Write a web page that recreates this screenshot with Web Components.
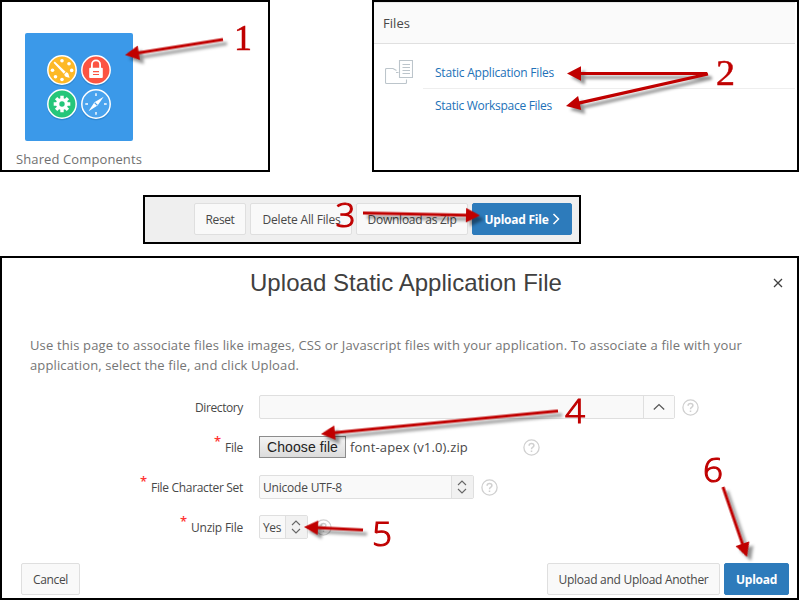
<!DOCTYPE html>
<html lang="en">
<head>
<meta charset="utf-8">
<title>Upload Static Application File</title>
<style>
html,body{margin:0;background:#fff}
body{width:800px;height:600px;overflow:hidden;font-family:"Open Sans","Noto Sans",sans-serif;font-size:12px;color:#484848}
</style>
</head>
<body>
<guide-page></guide-page>
<script>
const define = (name, html, init) => customElements.define(name, class extends HTMLElement {
  connectedCallback() {
    if (this.shadowRoot) return;
    const t = document.createElement('template');
    t.innerHTML = typeof html === 'function' ? html(this) : html;
    this.attachShadow({mode: 'open'}).append(t.content.cloneNode(true));
    if (init) init(this);
  }
});

// A line of text whose tracking is adjusted so that it spans the width in `w`.
define('fit-text', '<style>:host{display:inline-block;white-space:pre;flex:none}span{display:inline-block}</style><span><slot></slot></span>', el => {
  const s = el.shadowRoot.querySelector('span'), w = +el.getAttribute('w');
  const n = el.textContent.length;
  if (w && n) {
    el.style.width = w + 'px';
    s.style.letterSpacing = ((w - s.getBoundingClientRect().width) / n) + 'px';
  }
});

define('guide-panel', `<style>:host{display:block;box-sizing:border-box;border:2px solid #000;background:#fff;flex:none}</style><slot></slot>`);

define('ui-button', `<style>
:host{display:flex;box-sizing:border-box;height:32px;align-items:center;justify-content:center;gap:3px;border:1px solid #dfdfdf;border-radius:2px;background:#f9f9f9;color:#484848;font-size:12px;flex:none}
:host([hot]){background:#2d7bbb;border-color:#2d7bbb;color:#fff;font-weight:700}
</style><slot></slot>`);

define('help-icon', `<style>:host{display:block;width:17px;height:17px;flex:none}svg{display:block}</style>
<svg width="17" height="17" fill="none" stroke="#d0d0d0" stroke-width="1.3"><circle cx="8.5" cy="8.5" r="7.6"/><path d="M6.1 6.7Q6.2 4.6 8.5 4.6Q10.9 4.6 10.9 6.6Q10.9 7.7 9.6 8.4Q8.5 9 8.5 10.2M8.5 11.5V13" stroke-width="1.5"/></svg>`);

define('select-box', `<style>
:host{display:flex;box-sizing:border-box;height:24px;border:1px solid #dfdfdf;border-radius:2px;background:#f9f9f9;align-items:center;flex:none}
div{flex:1;padding-left:3px;line-height:22px;padding-top:1px}
i{display:flex;align-items:center;justify-content:center;box-sizing:border-box;width:22px;height:22px;border-left:1px solid #dfdfdf;background:#f1f1f1;padding-right:1px}
:host([combo]) i{width:31px;background:#fafafa;padding:0}
svg{display:block}
:host([combo]) .both,:host(:not([combo])) .up{display:none}
</style><div><slot></slot></div><i><svg class="both" width="10" height="14" fill="none" stroke="#666" stroke-width="1.1"><path d="M1 5L5 1L9 5M1 9L5 13L9 9"/></svg><svg class="up" width="12" height="8" fill="none" stroke="#555" stroke-width="1.2"><path d="M.8 6.5L6 1.5L11.2 6.5"/></svg></i>`);

define('form-row', el => `<style>
:host{display:flex;height:24px;align-items:center}
.l{width:241px;display:flex;justify-content:flex-end;gap:4px;margin-right:16px;padding-top:1px}
b{color:#f33;font:600 13px/17px "Open Sans",sans-serif;height:17px;margin-top:-6px}
</style><div class="l">${el.hasAttribute('required') ? '<b>*</b>' : ''}<fit-text w="${el.getAttribute('w')}">${el.getAttribute('label')}</fit-text></div><slot></slot>`);

define('file-input', `<style>
:host{display:flex;align-items:center;gap:4px;font-size:13px;color:#484848}
button{box-sizing:border-box;width:87px;height:22px;border:1px solid #8c8c8c;border-radius:0;padding:0;background:linear-gradient(#f4f4f4,#dcdcdc);font:14px "Liberation Sans",sans-serif;line-height:18px;color:#222}
</style><button><fit-text w="71">Choose file</fit-text></button><slot></slot>`);

define('components-icon', `<style>:host{display:block;width:108px;height:108px;background:#3b99e9;border-radius:2px}svg{display:block}</style>
<svg width="108" height="108" viewBox="0 0 108 108">
<g fill="#2478bd" opacity=".5"><circle cx="37" cy="38.3" r="15"/><circle cx="71" cy="38.3" r="15"/><circle cx="37" cy="72.3" r="15"/><circle cx="71" cy="72.3" r="15"/></g>
<g stroke="#fff" stroke-width="1.5"><circle cx="37" cy="37" r="14.2" fill="#fdb927"/><circle cx="71" cy="37" r="14.2" fill="#fc5442"/><circle cx="37" cy="71" r="14.2" fill="#25c67a"/><circle cx="71" cy="71" r="14.2" fill="#49a3ee"/></g>
<g fill="#fff"><circle cx="37" cy="27.7" r="1.8"/><circle cx="44" cy="30.7" r="1.8"/><circle cx="46.7" cy="37.4" r="1.8"/><circle cx="30.5" cy="43.8" r="1.8"/><circle cx="27.5" cy="37.3" r="1.8"/><circle cx="37" cy="46.5" r="1.8"/><path d="M28.5 29.8L29.8 28.6L40.6 38.8L38.8 40.7ZM39.3 41.2L41.2 39.2C43.7 39.5 43.4 41.3 44.7 44.7C41 44.2 39.6 43.5 39.3 41.2Z"/></g>
<path d="M66.9 35V31.5a4.1 4.1 0 0 1 8.2 0V35" fill="none" stroke="#fff" stroke-width="1.8"/><rect x="64.2" y="34.7" width="13.6" height="10.3" rx="1" fill="#fff"/><path d="M68 38.7H74M68 41.5H74" stroke="#fc5442" stroke-width="1.2"/>
<g stroke="#fff" stroke-width="3.4"><path d="M37 62.7V79.3M28.7 71H45.3M31.1 65.1L42.9 76.9M42.9 65.1L31.1 76.9"/></g><circle cx="37" cy="71" r="6" fill="#fff"/><circle cx="37" cy="71" r="2.7" fill="#25c67a"/>
<path d="M71 60.3V63M71 79V81.7M60.3 71H63M79 71H81.7" stroke="#fff" stroke-width="1.4"/><path d="M78.7 63.7L69.4 69.3L63.5 78.3L72.6 72.6Z" fill="#fff"/><path d="M69.6 69.6L72.4 72.4" stroke="#49a3ee" stroke-width="1.3"/></svg>`);

// Red pointers drawn over the panels, with their step numbers.
define('step-marks', () => {
  const lines = [[223,39.5,125,55],[707,73.5,567,73.5],[708,74,566,106],[363,213,480,215.5],[558,411,321,434],[363,530,304,527],[723,487,747,557]];
  const arrows = lines.map(([x1,y1,x2,y2]) => {
    const d = Math.hypot(x2-x1,y2-y1), a = Math.atan2(y2-y1,x2-x1)*180/Math.PI;
    return `<g transform="translate(${x1} ${y1}) rotate(${a})"><path d="M0 -1.6H${d-14}V-7.2L${d} 0L${d-14} 7.2V1.6H0Z"/></g>`;
  }).join('');
  const nums = [[1,234,50],[2,716,85],[3,335.5,227],[4,565,423],[5,372,546],[6,703,482]].map(([n,x,y]) => `<text class="${n<3?'s':''}" x="${x}" y="${y}" textLength="${n===2?19:n===1?18:20}" lengthAdjust="spacingAndGlyphs">${n}</text>`).join('');
  return `<style>:host{position:absolute;left:0;top:0;width:800px;height:600px;pointer-events:none}svg{display:block}.a{fill:#c00000;filter:drop-shadow(4px 4px 1.5px rgba(0,0,0,.42))}text{font:300 33px "Open Sans",sans-serif;fill:#c00000;stroke:#c00000;stroke-width:1.1px}text.s{font:35px "Liberation Serif",serif;stroke-width:.5px}</style>
  <svg width="800" height="600"><g class="a">${arrows}</g>${nums}</svg>`;
});

define('guide-page', `<style>
:host{display:block;position:relative;width:800px;height:600px;overflow:hidden}
.top{display:flex;justify-content:space-between;width:799px;height:172px}
.shared{width:270px;height:172px;padding:31px 0 0 14px}
.shared components-icon{margin-left:9px}
.shared fit-text{font-size:13px;line-height:18px;margin-top:9px;color:#707070}
.files{width:427px;height:172px}
.fh{height:42px;box-sizing:border-box;background:#fafafa;border-top:1px solid #e8e8e8;border-bottom:1px solid #e0e0e0;margin-right:2px;padding:11px 0 0 9px;font-size:13px;line-height:18px}
.fb{display:flex;padding:12px 2px 0 11px}
.fb svg{display:block;margin-top:4px;margin-right:10px}
.links{flex:1;color:#2271b8}
.links div{height:33px;padding-left:12px;display:flex;align-items:center;box-sizing:border-box}
.links div:first-child{border-bottom:1px solid #eee}
.bar{width:438px;height:49px;margin:23px 0 0 143px;background:#efefef;padding:6px 7px 0 0}
.row{display:flex;gap:4px;justify-content:flex-end}
.dialog{width:799px;height:344px;margin-top:12px;position:relative;display:flex;flex-direction:column}
.head{display:flex;align-items:center;height:50px;padding-left:248px;justify-content:space-between;padding-right:14px}
.title{font:24px/30px "Liberation Sans",sans-serif;color:#404040}
.intro{padding:27px 0 0 28px;font-size:13px;line-height:20px;height:94px;box-sizing:border-box;color:#757575}
.intro fit-text{display:block}
form-row{margin-bottom:16px}
.foot{display:flex;gap:4px;padding:0 8px 0 19px;margin-top:8px}
.grow{flex:1}
help-icon{margin:0 0 0 7px}
</style>
<div class="top">
 <guide-panel class="shared"><components-icon></components-icon><fit-text w="126">Shared Components</fit-text></guide-panel>
 <guide-panel class="files"><div class="fh"><fit-text w="27">Files</fit-text></div>
  <div class="fb"><svg width="28" height="26" fill="none" stroke="#bcc5cb" stroke-width="1.1"><path d="M11.5 10.5L8 8.5H1.5Q.5 8.5 .5 9.5V22.5Q.5 23.5 1.5 23.5H20.5Q21.5 23.5 21.5 22.5V19.5M11 12.5H13.5M14.5 .5H27.5V17.5H14.5ZM17.5 4.5H25M17.5 7.5H25M17.5 10.5H25M17.5 13.5H25"/></svg>
  <div class="links"><div><fit-text w="119">Static Application Files</fit-text></div><div><fit-text w="117">Static Workspace Files</fit-text></div></div></div>
 </guide-panel>
</div>
<guide-panel class="bar"><div class="row">
 <ui-button style="width:52px"><fit-text w="29">Reset</fit-text></ui-button>
 <ui-button style="width:102px;padding-left:1px"><fit-text w="78">Delete All Files</fit-text></ui-button>
 <ui-button style="width:112px"><fit-text w="89">Download as Zip</fit-text></ui-button>
 <ui-button hot style="width:100px"><fit-text w="64">Upload File</fit-text><svg width="8" height="12" fill="none" stroke="#fff" stroke-width="1.5"><path d="M1.5 1L6.5 6L1.5 11"/></svg></ui-button>
</div></guide-panel>
<guide-panel class="dialog">
 <div class="head"><fit-text class="title" w="312">Upload Static Application File</fit-text><svg width="10" height="10" stroke="#404040" stroke-width="1.3"><path d="M1 1L9 9M9 1L1 9"/></svg></div>
 <div class="intro"><fit-text w="712">Use this page to associate files like images, CSS or Javascript files with your application. To associate a file with your</fit-text><fit-text w="269">application, select the file, and click Upload.</fit-text></div>
 <form-row label="Directory" w="48" style="margin-top:-7px"><select-box combo style="width:416px"></select-box><help-icon></help-icon></form-row>
 <form-row label="File" w="18" required><file-input><fit-text w="118">font-apex (v1.0).zip</fit-text></file-input><help-icon style="margin-left:55px"></help-icon></form-row>
 <form-row label="File Character Set" w="92" required><select-box style="width:215px"><fit-text w="79">Unicode UTF-8</fit-text></select-box><help-icon></help-icon></form-row>
 <form-row label="Unzip File" w="52" required><select-box style="width:49px"><fit-text w="18">Yes</fit-text></select-box><help-icon></help-icon></form-row>
 <div class="foot"><ui-button style="width:59px"><fit-text w="35">Cancel</fit-text></ui-button><span class="grow"></span><ui-button style="width:173px"><fit-text w="150">Upload and Upload Another</fit-text></ui-button><ui-button hot style="width:65px"><fit-text w="41">Upload</fit-text></ui-button></div>
</guide-panel>
<step-marks></step-marks>`);
</script>
</body>
</html>
